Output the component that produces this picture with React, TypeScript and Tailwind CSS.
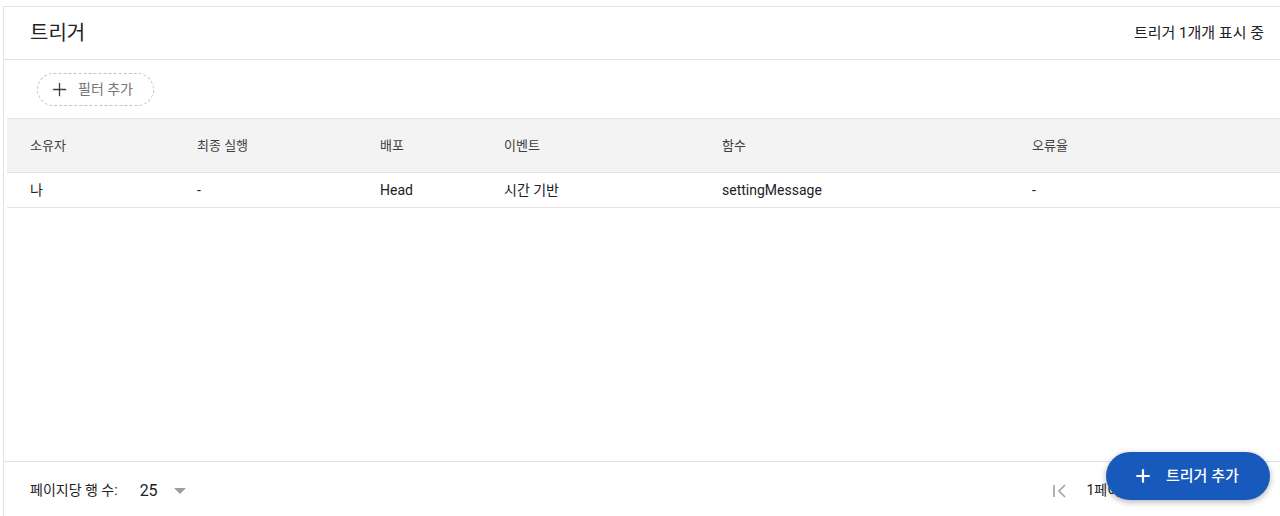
import { Plus } from 'lucide-react';

const font = { fontFamily: '"Roboto", "Noto Sans CJK KR", sans-serif' };

const columns = [
    { label: '소유자', width: 'w-[167px]' },
    { label: '최종 실행', width: 'w-[183px]' },
    { label: '배포', width: 'w-[124px]' },
    { label: '이벤트', width: 'w-[218px]' },
    { label: '함수', width: 'w-[310px]' },
    { label: '오류율', width: 'flex-1' },
];

const rows = [
    ['나', '-', 'Head', '시간 기반', 'settingMessage', '-'],
];

export default function App() {
    return (
        <div className="h-[516px] w-[1280px] bg-white pt-[6px] pl-[3px] overflow-hidden relative" style={font}>
            <div className="h-full flex flex-col border-l border-t border-[#e3e3e3]">
                {/* Header */}
                <div className="h-[53px] flex items-center justify-between pl-[26px] pr-[16px] border-b border-[#e3e3e3] shrink-0">
                    <h1 className="text-[20px] text-[#202124] leading-none">트리거</h1>
                    <span className="text-[15px] text-[#202124]">트리거 1개개 표시 중</span>
                </div>

                {/* Filter */}
                <div className="h-[58px] flex items-center pl-[33px] shrink-0">
                    <button className="h-[33px] w-[117px] flex items-center gap-[8px] pl-[11px] rounded-full border border-dashed border-[#c4c4c4]">
                        <Plus size={21} strokeWidth={1.5} className="text-[#3c4043]" />
                        <span className="text-[14px] text-[#757575]">필터 추가</span>
                    </button>
                </div>

                {/* Table */}
                <div className="flex-1 pl-[3px]">
                    <div className="h-[55px] flex items-center bg-[#f3f3f3] border-t border-b border-[#e3e3e3]">
                        {columns.map(c => (
                            <div key={c.label} className={`${c.width} pl-[23px] text-[13px] text-[#3c4043]`}>{c.label}</div>
                        ))}
                    </div>
                    {rows.map((r, i) => (
                        <div key={i} className="h-[35px] flex items-center border-b border-[#e3e3e3]">
                            {r.map((cell, j) => (
                                <div key={j} className={`${columns[j].width} pl-[23px] text-[14px] text-[#202124]`}>{cell}</div>
                            ))}
                        </div>
                    ))}
                </div>

                {/* Footer */}
                <div className="h-[55px] flex items-center justify-between border-t border-[#e3e3e3] pl-[26px] pr-[16px] pt-[3px] shrink-0">
                    <div className="flex items-center">
                        <span className="text-[14px] text-[#202124]">페이지당 행 수:</span>
                        <span className="ml-[22px] text-[16px] text-[#202124]">25</span>
                        <span className="ml-[16px] w-0 h-0 border-l-[6px] border-r-[6px] border-t-[6px] border-l-transparent border-r-transparent border-t-[#9e9e9e]" />
                    </div>
                    <div className="flex items-center gap-[18px] pr-[131px]">
                        <svg width="16" height="16" viewBox="0 0 16 16" fill="none" stroke="#a0a0a0" strokeWidth="1.6">
                            <path d="M2 2v12M13 2 7 8l6 6" />
                        </svg>
                        <span className="text-[14px] text-[#202124]">1페이지</span>
                    </div>
                </div>
            </div>

            {/* FAB */}
            <button className="absolute left-[1106px] top-[452px] w-[164px] h-[48px] rounded-full bg-[#185abc] shadow-[0_2px_6px_rgba(0,0,0,0.3)] flex items-center pl-[27px] text-white">
                <Plus size={20} strokeWidth={2.6} />
                <span className="ml-[13px] text-[15px] font-medium">트리거 추가</span>
            </button>
        </div>
    );
}
